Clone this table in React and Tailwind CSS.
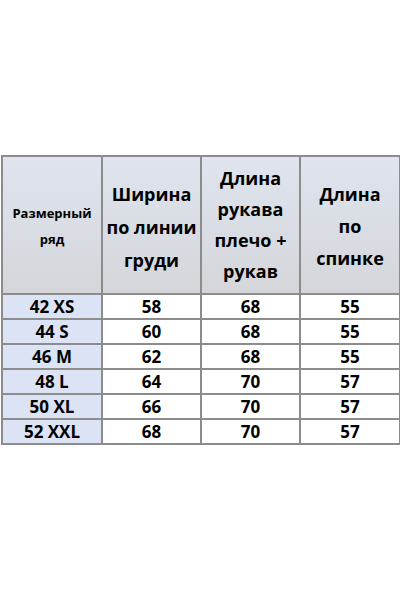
import React from "react";

const rows = [
  ["42 XS", "58", "68", "55"],
  ["44 S", "60", "68", "55"],
  ["46 M", "62", "68", "55"],
  ["48 L", "64", "70", "57"],
  ["50 XL", "66", "70", "57"],
  ["52 XXL", "68", "70", "57"],
];

const head = "border-2 border-[#8c8c8c] bg-gradient-to-b from-[#dfe4ee] to-[#d4d6da] text-center align-middle font-bold text-black";
const cell = "border-2 border-[#8c8c8c] h-[25px] p-0 text-center align-middle font-bold text-[17px] leading-[20px] text-black";

export default function App() {
  return (
    <div className="w-[400px] h-[600px] bg-white pt-[155px] pl-[1px]" style={{ fontFamily: '"Open Sans", "Noto Sans", sans-serif' }}>
      <table className="border-collapse table-fixed w-[398px]">
        <colgroup>
          <col className="w-[100px]" />
          <col className="w-[99px]" />
          <col className="w-[99px]" />
          <col className="w-[100px]" />
        </colgroup>
        <thead>
          <tr className="h-[138px]">
            <th className={`${head} text-[13px] leading-[26px] pt-[2px]`}>
              Размерный
              <br />
              ряд
            </th>
            <th className={`${head} text-[18px] leading-[33px] pt-[4px]`}>
              Ширина
              <br />
              по линии
              <br />
              груди
            </th>
            <th className={`${head} text-[18px] leading-[31px]`}>
              Длина
              <br />
              рукава
              <br />
              плечо +
              <br />
              рукав
            </th>
            <th className={`${head} text-[18px] leading-[32px] pt-[2px]`}>
              Длина
              <br />
              по
              <br />
              спинке
            </th>
          </tr>
        </thead>
        <tbody>
          {rows.map((r) => (
            <tr key={r[0]}>
              <td className={`${cell} bg-[#dbe3f4]`}>{r[0]}</td>
              <td className={`${cell} bg-white`}>{r[1]}</td>
              <td className={`${cell} bg-white`}>{r[2]}</td>
              <td className={`${cell} bg-white`}>{r[3]}</td>
            </tr>
          ))}
        </tbody>
      </table>
    </div>
  );
}
